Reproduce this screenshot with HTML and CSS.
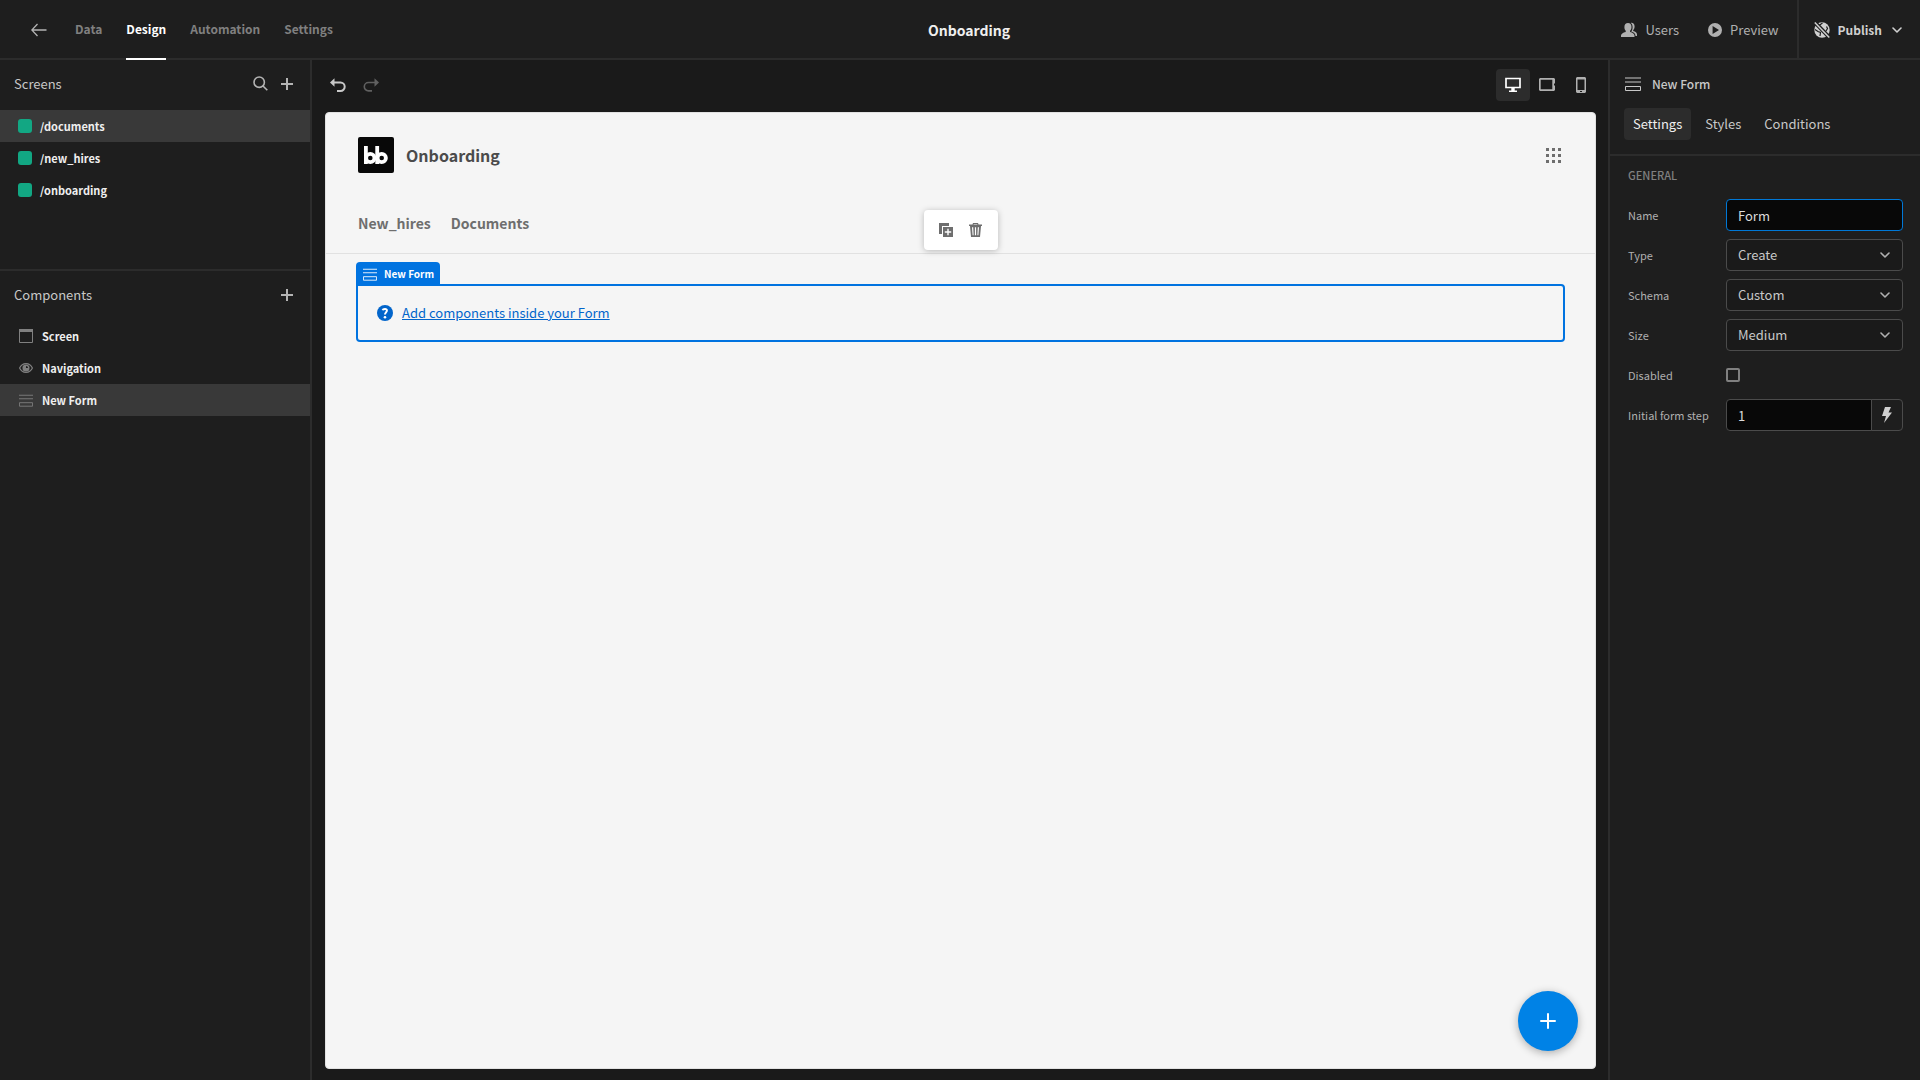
FILE: index.html
```html
<!DOCTYPE html>
<html lang="en">
<head>
<meta charset="utf-8">
<title>Onboarding</title>
<link rel="stylesheet" href="styles.css">
</head>
<body>
<svg class="sprite" aria-hidden="true">
  <symbol id="plus" viewBox="0 0 14 14"><path d="M7 1v12M1 7h12" fill="none" stroke="currentColor" stroke-width="2"/></symbol>
  <symbol id="chevron" viewBox="0 0 10 6"><path d="M1 1l4 4 4-4" fill="none" stroke="currentColor" stroke-width="1.600" stroke-linecap="round" stroke-linejoin="round"/></symbol>
  <symbol id="form" viewBox="0 0 16 14"><path d="M0 1h16M0 5h16M.5 9.500h15v4H.5z" fill="none" stroke="currentColor"/></symbol>
</svg>
<div class="app">
  <header class="topbar">
    <div class="topbar-left">
      <a class="back" href="#" aria-label="Back"><svg width="16" height="14" viewBox="0 0 16 14"><path d="M15.500 7H1M6.500 1L.8 7l5.700 6" fill="none" stroke="currentColor" stroke-width="1.300"/></svg></a>
      <nav class="main-nav">
        <a href="#">Data</a><a class="active" href="#">Design</a><a href="#">Automation</a><a href="#">Settings</a>
      </nav>
    </div>
    <h1 class="app-title">Onboarding</h1>
    <div class="topbar-right">
      <button class="top-btn"><svg width="16" height="16" viewBox="0 0 16 16"><path fill="currentColor" d="M7 1c2.200 0 3.500 1.600 3.500 4 0 1.600-.6 3-1.400 3.800v1.100c2.700.7 4.400 1.900 4.400 3.600V15H0v-1.500c0-1.700 1.900-2.900 4.700-3.600V8.800C3.900 8 3.400 6.600 3.400 5c0-2.400 1.400-4 3.600-4zM9.800.9C12 .5 13.600 2 13.600 4.400c0 1.500-.5 2.900-1.400 3.700v1c2.300.6 3.800 1.800 3.800 3.400V14h-1.500c0-2-1.400-3.500-4.300-4.400.8-1 1.400-2.600 1.400-4.400 0-1.800-.6-3.300-1.800-4.300z"/></svg>Users</button>
      <button class="top-btn"><svg width="14" height="14" viewBox="0 0 14 14"><path fill="currentColor" fill-rule="evenodd" d="M7 0a7 7 0 110 14A7 7 0 017 0zM4.600 3v8L11 7z"/></svg>Preview</button>
      <button class="publish"><svg class="globe" width="16" height="16" viewBox="0 0 16 16"><circle cx="8" cy="8" r="7.700" fill="currentColor"/><path class="gap" d="M5 3.500L8.500 1M1 7.500l3 2 2.500 1L6 14M12.500 4.500l1 2-1.500 2.500" fill="none" stroke-width="1.200"/><path class="gap" d="M.5 0l15.500 16" stroke-width="4"/><path d="M.8.500l14.500 15" stroke="currentColor" stroke-width="1.500"/></svg>Publish<svg class="caret" width="10" height="6"><use href="#chevron"/></svg></button>
    </div>
  </header>
  <div class="workspace">
    <aside class="sidebar">
      <section class="screens">
        <div class="section-head"><h2>Screens</h2>
          <button class="icon-btn" aria-label="Search"><svg width="15" height="15" viewBox="0 0 15 15"><g fill="none" stroke="currentColor" stroke-width="1.600"><circle cx="6.200" cy="6.200" r="5.200"/><path d="M10 10l4.300 4.300"/></g></svg></button>
          <button class="icon-btn" aria-label="Add screen"><svg width="14" height="14"><use href="#plus"/></svg></button>
        </div>
        <a class="row active" href="#"><span class="swatch"></span>/documents</a>
        <a class="row" href="#"><span class="swatch"></span>/new_hires</a>
        <a class="row" href="#"><span class="swatch"></span>/onboarding</a>
      </section>
      <section class="components">
        <div class="section-head"><h2>Components</h2>
          <button class="icon-btn" aria-label="Add component"><svg width="14" height="14"><use href="#plus"/></svg></button>
        </div>
        <a class="row tree" href="#"><svg width="14" height="14" viewBox="0 0 14 14"><path d="M.5 1.500h13v12H.5z" fill="none" stroke="currentColor"/><path d="M0 0h14v3H0z" fill="currentColor"/></svg>Screen</a>
        <a class="row tree" href="#"><svg width="14" height="14" viewBox="0 0 14 14"><path d="M.6 7C2 4 4.200 2.600 7 2.600S12 4 13.400 7C12 10 9.800 11.400 7 11.400S2 10 .6 7z" fill="none" stroke="currentColor" stroke-width="1.200"/><circle cx="7" cy="7" r="2.800" fill="none" stroke="currentColor" stroke-width="1.500"/><path d="M5 4.500h2V7h2v2H5z" fill="currentColor"/></svg>Navigation</a>
        <a class="row tree active" href="#"><svg width="14" height="13"><use href="#form"/></svg>New Form</a>
      </section>
    </aside>
    <main class="stage">
      <div class="stage-bar">
        <div class="history">
          <button aria-label="Undo"><svg width="16" height="14" viewBox="0 0 16 14"><path d="M3 4.500h7.500a4.200 4.200 0 010 8.400H7" fill="none" stroke="currentColor" stroke-width="2"/><path fill="currentColor" d="M0 4.500L4.500.3v8.400z"/></svg></button>
          <button class="off" aria-label="Redo"><svg width="16" height="14" viewBox="0 0 16 14"><path d="M13 4.500H5.500a4.200 4.200 0 000 8.400H9" fill="none" stroke="currentColor" stroke-width="1.600"/><path fill="currentColor" d="M16 4.500L11.500.3v8.400z"/></svg></button>
        </div>
        <div class="devices">
          <button class="active" aria-label="Desktop"><svg width="16" height="16" viewBox="0 0 16 16"><path d="M1 1.500h14v9H1z" fill="none" stroke="currentColor" stroke-width="1.700"/><path fill="currentColor" d="M6.300 11h3.400v2.500H12V15H4v-1.500h2.300z"/></svg></button>
          <button aria-label="Tablet"><svg width="16" height="13" viewBox="0 0 16 13"><path fill="currentColor" fill-rule="evenodd" d="M1 0h14l1 1v4.500h-1v2h1V12l-1 1H1l-1-1V1zm.7 1.700v9.600h11.600V1.700z"/></svg></button>
          <button aria-label="Phone"><svg width="10" height="16" viewBox="0 0 10 16"><path fill="currentColor" fill-rule="evenodd" d="M1 0h8l1 1v14l-1 1H1l-1-1V1zm.5 2.500v10.500h7V2.500zM4 14v1h2v-1z"/></svg></button>
        </div>
      </div>
      <div class="canvas">
        <header class="site-head">
          <div class="brand">
            <svg class="logo" width="36" height="36" viewBox="0 0 36 36"><rect width="36" height="36" rx="2" fill="#080808"/><g fill="none" stroke="#fff" stroke-width="3.800"><path d="M7.900 9v18M19.200 9v18"/><circle cx="12.300" cy="21" r="4.200"/><circle cx="23.700" cy="21" r="4.200"/></g></svg>
            <span>Onboarding</span>
            <button class="apps" aria-label="Apps"><svg width="15" height="15" viewBox="0 0 15 15"><path fill="currentColor" d="M0 0h3v3H0zM6 0h3v3H6zM12 0h3v3h-3zM0 6h3v3H0zM6 6h3v3H6zM12 6h3v3h-3zM0 12h3v3H0zM6 12h3v3H6zM12 12h3v3h-3z"/></svg></button>
          </div>
          <nav class="site-nav"><a href="#">New_hires</a><a href="#">Documents</a></nav>
          <div class="float-tools">
            <button aria-label="Duplicate"><svg width="14" height="14" viewBox="0 0 14 14"><path fill="currentColor" d="M0 0h10v3H3v8H0z"/><path fill="currentColor" fill-rule="evenodd" d="M4 4h10v10H4zm4.300 1.800v2.500H5.800v1.400h2.500v2.500h1.400V9.700h2.500V8.300H9.700V5.800z"/></svg></button>
            <button aria-label="Delete"><svg width="13" height="14" viewBox="0 0 13 14"><path fill="currentColor" fill-rule="evenodd" d="M4 0h5l.5 1.500H13V3h-1l-1 11H2L1 3H0V1.500h3.500zm.5 1.500h4L8.200 1H4.800zM3 4.200l.6 8h1L4.200 4.200zm2.900 0v8h1.200v-8zm2.900 0l-.4 8h1l.6-8z"/></svg></button>
          </div>
        </header>
        <div class="site-body">
          <div class="tag"><svg width="14" height="13"><use href="#form"/></svg>New Form</div>
          <div class="drop">
            <svg width="16" height="16" viewBox="0 0 16 16"><circle cx="8" cy="8" r="8" fill="currentColor"/><path d="M5.600 5.200C6 4 9.900 3 9.900 5.500 9.900 7.300 8 7.400 8 9.500" fill="none" stroke="#fff" stroke-width="2"/><circle cx="8" cy="12.200" r="1.300" fill="#fff"/></svg>
            <a href="#">Add components inside your Form</a>
          </div>
        </div>
        <button class="fab" aria-label="Add"><svg width="16" height="16" viewBox="0 0 16 16"><path d="M8 1v14M1 8h14" stroke="#fff" stroke-width="2" fill="none" stroke-linecap="round"/></svg></button>
      </div>
    </main>
    <aside class="panel">
      <div class="panel-head">
        <h2><svg width="16" height="14"><use href="#form"/></svg>New Form</h2>
        <div class="tabs"><button class="active">Settings</button><button>Styles</button><button>Conditions</button></div>
      </div>
      <form class="settings">
        <h3>GENERAL</h3>
        <div class="field"><label for="name">Name</label><input class="text focus" id="name" type="text" value="Form"></div>
        <div class="field"><label for="type">Type</label><div class="picker"><select id="type"><option>Create</option></select><svg width="10" height="6"><use href="#chevron"/></svg></div></div>
        <div class="field"><label for="schema">Schema</label><div class="picker"><select id="schema"><option>Custom</option></select><svg width="10" height="6"><use href="#chevron"/></svg></div></div>
        <div class="field"><label for="size">Size</label><div class="picker"><select id="size"><option>Medium</option></select><svg width="10" height="6"><use href="#chevron"/></svg></div></div>
        <div class="field"><label for="disabled">Disabled</label><input class="check" id="disabled" type="checkbox"></div>
        <div class="field"><label for="step">Initial form step</label><div class="combo"><input class="text" id="step" type="text" value="1"><button type="button" aria-label="Bind value"><svg width="10" height="16" viewBox="0 0 10 16"><path fill="currentColor" d="M3 0h6L6.500 5.500H10L2 16l2-7H0z"/></svg></button></div></div>
      </form>
    </aside>
  </div>
</div>
</body>
</html>
```
FILE: styles.css
```css
* { box-sizing: border-box; }
body {
  margin: 0;
  background: #1a1a1a;
  color: #c8c8c8;
  font: 400 13px/20px "Noto Sans CJK SC", "Noto Sans", sans-serif;
}
h1, h2, h3 { margin: 0; font-weight: 400; }
a { color: inherit; text-decoration: none; }
button, input, select { font: inherit; color: inherit; margin: 0; }
button { border: 0; padding: 0; background: none; display: flex; align-items: center; justify-content: center; }
svg { display: block; flex: none; }
.sprite { position: absolute; width: 0; height: 0; }
.app { display: flex; flex-direction: column; min-height: 100vh; }

.topbar {
  display: grid;
  grid-template-columns: 1fr auto 1fr;
  height: 60px;
  padding-left: 18px;
  background: #1e1e1e;
  border-bottom: 2px solid #2c2c2c;
  align-items: center;
}
.topbar-left { display: flex; align-items: center; align-self: start; gap: 28px; padding-left: 13px; }
.back { color: #b4b4b4; }
.main-nav { display: flex; gap: 24px; color: #808080; font-size: 12px; font-weight: 700; }
.main-nav a { display: flex; align-items: center; height: 60px; border-bottom: 2px solid transparent; }
.main-nav .active { color: #fff; border-color: #fff; }
.app-title { font-size: 14px; font-weight: 700; color: #efefef; }
.topbar-right { display: flex; justify-content: flex-end; align-self: stretch; color: #b0b0b0; }
.top-btn { gap: 8px; margin-right: 29px; }
.top-btn + .top-btn { margin-right: 18px; }
.publish { gap: 8px; padding: 0 18px 0 15px; border-left: 2px solid #2c2c2c; color: #d0d0d0; font-size: 12px; font-weight: 700; }
.globe .gap { stroke: #1e1e1e; }
.caret { margin-left: 2px; }

.workspace { display: grid; grid-template-columns: 312px 1fr 312px; flex: 1; }
.sidebar { background: #1e1e1e; border-right: 2px solid #2c2c2c; }
.screens { height: 211px; border-bottom: 2px solid #2c2c2c; }
.section-head { display: flex; align-items: center; height: 49px; padding: 0 16px 2px 14px; gap: 11px; }
.screens .section-head { margin-bottom: 1px; }
.section-head h2 { flex: 1; font-size: 13px; }
.icon-btn { width: 15px; height: 15px; color: #b4b4b4; }
.row { display: flex; align-items: center; gap: 8px; height: 32px; padding-left: 18px; font-size: 11px; font-weight: 700; color: #efefef; }
.row.active { background: #393939; }
.row svg { color: #808080; }
.row.tree { gap: 9px; padding-left: 19px; }
.swatch { width: 14px; height: 14px; border-radius: 3px; background: #12a783; }

.stage { display: flex; flex-direction: column; padding: 0 12px 11px 13px; }
.stage-bar { display: flex; justify-content: space-between; align-items: center; height: 52px; padding-bottom: 3px; }
.history { display: flex; gap: 17px; padding-left: 5px; color: #c8c8c8; }
.history .off { color: #606060; }
.devices { display: flex; margin-right: -2px; color: #b0b0b0; }
.devices button { width: 34px; height: 32px; border-radius: 4px; }
.devices .active { background: #2c2c2c; color: #fff; }
.canvas { position: relative; flex: 1; border: 1px solid #e1e1e1; border-radius: 4px; background: #f5f5f5; color: #6e6e6e; }
.site-head { position: relative; padding: 24px 32px 0; height: 141px; border-bottom: 1px solid #e1e1e1; }
.brand { display: flex; align-items: center; gap: 12px; color: #4b4b4b; font-size: 16px; font-weight: 700; }
.apps { margin: 0 2px 0 auto; color: #6e6e6e; }
.site-nav { display: flex; gap: 20px; margin-top: 40px; font-size: 14px; font-weight: 700; }
.float-tools { position: absolute; left: calc(50% - 37px); top: 97px; width: 74px; height: 40px; display: flex; align-items: center; justify-content: center; gap: 16px; border-radius: 4px; background: #fff; box-shadow: 0 1px 6px rgba(0, 0, 0, .25); }
.site-body { display: flex; flex-direction: column; align-items: flex-start; padding: 8px 30px 0; }
.tag { display: flex; align-items: center; gap: 7px; height: 24px; padding: 0 6px 0 7px; border-radius: 4px 4px 0 0; background: #0073e0; color: #fff; font-size: 10px; font-weight: 700; }
.drop { display: flex; align-items: center; gap: 9px; align-self: stretch; height: 58px; padding: 0 19px; margin-top: -2px; border: 2px solid #0073e0; border-radius: 0 4px 4px 4px; color: #0265cb; }
.drop a { text-decoration: underline; }
.fab { position: absolute; right: 17px; bottom: 17px; width: 60px; height: 60px; border-radius: 50%; background: #0082e6; box-shadow: 0 2px 8px rgba(0, 0, 0, .3); }

.panel { background: #1e1e1e; border-left: 2px solid #2c2c2c; }
.panel-head { padding: 14px; border-bottom: 2px solid #2c2c2c; }
.panel-head h2 { display: flex; align-items: center; gap: 11px; font-size: 12px; font-weight: 500; height: 20px; padding-left: 1px; }
.tabs { display: flex; gap: 5px; margin-top: 14px; }
.tabs button { height: 32px; padding: 0 9px; border-radius: 4px; }
.tabs .active { background: #2c2c2c; color: #efefef; }
.settings { display: flex; flex-direction: column; gap: 8px; padding: 9px 17px 0 18px; }
.settings h3 { height: 26px; font-size: 11px; font-weight: 500; color: #808080; }
.field { display: grid; grid-template-columns: 98px 1fr; align-items: center; height: 32px; font-size: 11px; color: #b0b0b0; }
.text, .picker select { width: 100%; min-width: 0; height: 32px; padding: 0 11px; border: 1px solid #4b4b4b; border-radius: 4px; font-size: 13px; color: #c8c8c8; }
.text { background: #080808; color: #dcdcdc; outline: 0; }
.focus { border-color: #0078d7; }
.picker { display: grid; align-items: center; }
.picker select { grid-area: 1 / 1; appearance: none; background: #1a1a1a; }
.picker svg { grid-area: 1 / 1; justify-self: end; margin-right: 13px; pointer-events: none; }
.check { appearance: none; width: 14px; height: 14px; border: 2px solid #808080; border-radius: 2px; }
.combo { display: flex; }
.combo .text { border-radius: 4px 0 0 4px; }
.combo button { flex: none; width: 32px; height: 32px; margin-left: -1px; border: 1px solid #4b4b4b; border-radius: 0 4px 4px 0; color: #d0d0d0; }
```
